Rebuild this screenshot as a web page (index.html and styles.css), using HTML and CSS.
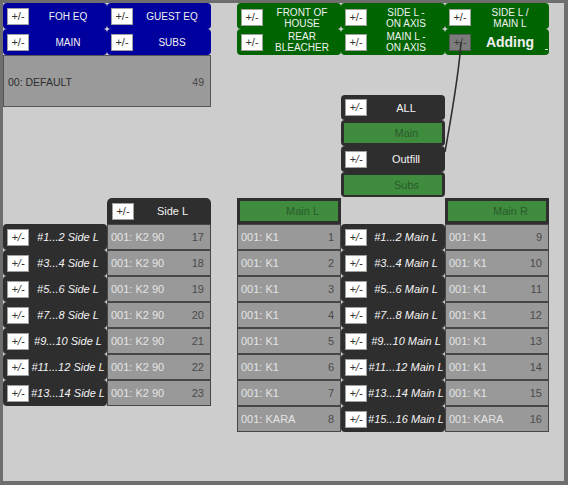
FILE: index.html
```html
<!DOCTYPE html>
<html>
<head>
<meta charset="utf-8">
<link rel="stylesheet" href="styles.css">
</head>
<body>
<div class="frame">
  <div class="board">
    <div class="tbtn blue c1 r1"><span class="pm">+/-</span><span class="lbl">FOH EQ</span></div>
    <div class="tbtn blue c2 r1"><span class="pm">+/-</span><span class="lbl">GUEST EQ</span></div>
    <div class="tbtn blue c1 r2"><span class="pm">+/-</span><span class="lbl">MAIN</span></div>
    <div class="tbtn blue c2 r2"><span class="pm">+/-</span><span class="lbl">SUBS</span></div>

    <div class="tbtn green c4 r1"><span class="pm">+/-</span><span class="lbl two">FRONT OF<br>HOUSE</span></div>
    <div class="tbtn green c5 r1"><span class="pm">+/-</span><span class="lbl two">SIDE L -<br>ON AXIS</span></div>
    <div class="tbtn green c6 r1"><span class="pm">+/-</span><span class="lbl two">SIDE L /<br>MAIN L</span></div>
    <div class="tbtn green c4 r2"><span class="pm">+/-</span><span class="lbl two">REAR<br>BLEACHER</span></div>
    <div class="tbtn green c5 r2"><span class="pm">+/-</span><span class="lbl two">MAIN L -<br>ON AXIS</span></div>
    <div class="tbtn green c6 r2 adding"><span class="pm gray">+/-</span><span class="lbl big">Adding</span><span class="tick"></span></div>

    <div class="preset"><span>00: DEFAULT</span><span class="num">49</span></div>

    <div class="midblock">
      <div class="drow h25"><span class="pm">+/-</span><span class="lbl up">ALL</span></div>
      <div class="drow h26"><div class="gbar">Main</div></div>
      <div class="drow h26"><span class="pm">+/-</span><span class="lbl up">Outfill</span></div>
      <div class="drow h25"><div class="gbar">Subs</div></div>
    </div>

    <div class="hdr sidel"><span class="pm">+/-</span><span class="lbl up">Side L</span></div>
    <div class="hdr framed c4h"><div class="gbar">Main L</div></div>
    <div class="hdr framed c6h"><div class="gbar">Main R</div></div>

    <div class="stack s1">
      <div class="drow h26"><span class="pm">+/-</span><span class="lbl">#1...2 Side L</span></div>
      <div class="drow h26"><span class="pm">+/-</span><span class="lbl">#3...4 Side L</span></div>
      <div class="drow h26"><span class="pm">+/-</span><span class="lbl">#5...6 Side L</span></div>
      <div class="drow h26"><span class="pm">+/-</span><span class="lbl">#7...8 Side L</span></div>
      <div class="drow h26"><span class="pm">+/-</span><span class="lbl">#9...10 Side L</span></div>
      <div class="drow h26"><span class="pm">+/-</span><span class="lbl">#11...12 Side L</span></div>
      <div class="drow h26"><span class="pm">+/-</span><span class="lbl">#13...14 Side L</span></div>
    </div>

    <div class="stack s2">
      <div class="cell"><span>001: K2 90</span><span class="num">17</span></div>
      <div class="cell"><span>001: K2 90</span><span class="num">18</span></div>
      <div class="cell"><span>001: K2 90</span><span class="num">19</span></div>
      <div class="cell"><span>001: K2 90</span><span class="num">20</span></div>
      <div class="cell"><span>001: K2 90</span><span class="num">21</span></div>
      <div class="cell"><span>001: K2 90</span><span class="num">22</span></div>
      <div class="cell"><span>001: K2 90</span><span class="num">23</span></div>
    </div>

    <div class="stack s4">
      <div class="cell"><span>001: K1</span><span class="num">1</span></div>
      <div class="cell"><span>001: K1</span><span class="num">2</span></div>
      <div class="cell"><span>001: K1</span><span class="num">3</span></div>
      <div class="cell"><span>001: K1</span><span class="num">4</span></div>
      <div class="cell"><span>001: K1</span><span class="num">5</span></div>
      <div class="cell"><span>001: K1</span><span class="num">6</span></div>
      <div class="cell"><span>001: K1</span><span class="num">7</span></div>
      <div class="cell"><span>001: KARA</span><span class="num">8</span></div>
    </div>

    <div class="stack s5">
      <div class="drow h26"><span class="pm">+/-</span><span class="lbl">#1...2 Main L</span></div>
      <div class="drow h26"><span class="pm">+/-</span><span class="lbl">#3...4 Main L</span></div>
      <div class="drow h26"><span class="pm">+/-</span><span class="lbl">#5...6 Main L</span></div>
      <div class="drow h26"><span class="pm">+/-</span><span class="lbl">#7...8 Main L</span></div>
      <div class="drow h26"><span class="pm">+/-</span><span class="lbl">#9...10 Main L</span></div>
      <div class="drow h26"><span class="pm">+/-</span><span class="lbl">#11...12 Main L</span></div>
      <div class="drow h26"><span class="pm">+/-</span><span class="lbl">#13...14 Main L</span></div>
      <div class="drow h26"><span class="pm">+/-</span><span class="lbl">#15...16 Main L</span></div>
    </div>

    <div class="stack s6">
      <div class="cell"><span>001: K1</span><span class="num">9</span></div>
      <div class="cell"><span>001: K1</span><span class="num">10</span></div>
      <div class="cell"><span>001: K1</span><span class="num">11</span></div>
      <div class="cell"><span>001: K1</span><span class="num">12</span></div>
      <div class="cell"><span>001: K1</span><span class="num">13</span></div>
      <div class="cell"><span>001: K1</span><span class="num">14</span></div>
      <div class="cell"><span>001: K1</span><span class="num">15</span></div>
      <div class="cell"><span>001: KARA</span><span class="num">16</span></div>
    </div>
  </div>

  <svg class="wire" width="568" height="485" viewBox="0 0 568 485">
    <path d="M461 42 C 459 75, 452 112, 445 152" fill="none" stroke="#2f2f2f" stroke-width="1.6"/>
  </svg>
</div>
</body>
</html>
```

FILE: styles.css
```css
html, body {
  margin: 0;
  padding: 0;
  background: #6e6e6e;
}

.frame {
  position: relative;
  width: 568px;
  height: 485px;
  box-sizing: border-box;
  border-style: solid;
  border-color: #6e6e6e;
  border-width: 3px 4px 4px 3px;
  background: #cdcdcd;
  font-family: "Liberation Sans", Arial, sans-serif;
  font-size: 11px;
  overflow: hidden;
}

.board {
  display: grid;
  grid-template-columns: 104px 104px 26px 104px 104px 104px;
  grid-template-rows: 26px 26px 40px 12px 91px 26px repeat(8, 26px);
}

.c1 { grid-column: 1; }
.c2 { grid-column: 2; }
.c4 { grid-column: 4; }
.c5 { grid-column: 5; }
.c6 { grid-column: 6; }
.r1 { grid-row: 1; }
.r2 { grid-row: 2; }

.tbtn {
  display: flex;
  align-items: center;
  padding-left: 4px;
  border-radius: 4px;
  color: #f2f2f2;
  font-size: 10px;
  position: relative;
}
.blue { background: #00009e; }
.green { background: #006400; }
.green.r1 { padding-top: 3px; box-sizing: border-box; }

.pm {
  flex: none;
  width: 20px;
  height: 15px;
  background: #fff;
  border: 1px solid #a0a0a0;
  color: #333;
  font-size: 11px;
  line-height: 15px;
  text-align: center;
}
.pm.gray {
  background: #7c7c7c;
  border-color: #5a5a5a;
  color: #3a3a3a;
}

.lbl {
  flex: 1;
  text-align: center;
  white-space: nowrap;
}
.lbl.two {
  line-height: 11px;
}
.lbl.big {
  font-size: 14px;
  font-weight: bold;
  color: #f0f0f0;
}
.tick {
  position: absolute;
  right: 1px;
  top: 20px;
  width: 3px;
  height: 1px;
  background: #e8e8e8;
}

.preset {
  grid-column: 1 / 3;
  grid-row: 3 / 5;
  background: #9a9a9a;
  border: 1px solid #555;
  box-sizing: border-box;
  width: 208px;
  display: flex;
  align-items: center;
  justify-content: space-between;
  padding: 2px 6px 0 4px;
  font-size: 10.5px;
  color: #2e2e2e;
}
.preset .num { color: #444; }

.midblock {
  grid-column: 5;
  grid-row: 4 / 6;
  align-self: start;
  display: flex;
  flex-direction: column;
}

.drow {
  display: flex;
  align-items: center;
  padding-left: 4px;
  box-sizing: border-box;
  background: #2e2e2e;
  border-radius: 4px;
  color: #f4f4f4;
  font-style: italic;
}
.h25 { height: 25px; }
.h26 { height: 26px; }
.drow .lbl.up { font-style: normal; }

.drow .gbar {
  flex: 1;
  margin-right: 3px;
  margin-left: -1px;
}

.gbar {
  height: 20px;
  box-sizing: border-box;
  background: #3f8c3f;
  color: #2b5a2b;
  font-style: normal;
  font-size: 11px;
  line-height: 20px;
  padding-left: 27px;
  text-align: center;
}

.hdr {
  grid-row: 6;
  display: flex;
  align-items: center;
  box-sizing: border-box;
  background: #2e2e2e;
  color: #f4f4f4;
}
.sidel {
  grid-column: 2;
  padding-left: 5px;
  border-radius: 5px 5px 0 0;
}
.framed {
  padding: 3px;
}
.framed .gbar { flex: 1; }
.c4h { grid-column: 4; }
.c6h { grid-column: 6; }

.stack {
  grid-row: 7 / span 8;
  display: flex;
  flex-direction: column;
}
.s1 { grid-column: 1; }
.s2 { grid-column: 2; }
.s4 { grid-column: 4; }
.s5 { grid-column: 5; }
.s6 { grid-column: 6; }

.cell {
  height: 26px;
  box-sizing: border-box;
  background: #999;
  border: 1px solid #474747;
  display: flex;
  align-items: center;
  justify-content: space-between;
  padding: 0 6px 0 3px;
  color: #e4e4e4;
}
.cell .num { color: #4b4b4b; }

.wire {
  position: absolute;
  left: -3px;
  top: -3px;
  pointer-events: none;
}
```
